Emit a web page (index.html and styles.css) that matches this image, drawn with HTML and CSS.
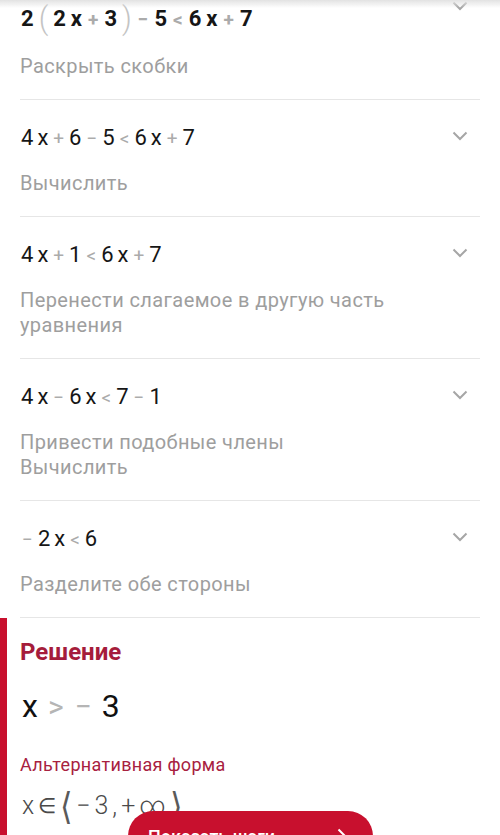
FILE: index.html
```html
<!DOCTYPE html>
<html lang="ru">
<head>
<meta charset="utf-8">
<title>Решение</title>
<link rel="stylesheet" href="styles.css">
</head>
<body>
<div class="top-shadow"></div>
<main class="page">
  <ul class="steps">
    <li class="step step-first">
      <div class="step-head">
        <div class="expr expr-bold">
          <span>2</span><span class="paren">(</span><span>2</span><span>x</span><span class="op">+</span><span>3</span><span class="paren">)</span><span class="op">−</span><span>5</span><span class="op">&lt;</span><span>6</span><span>x</span><span class="op">+</span><span>7</span>
        </div>
        <svg class="chev" viewBox="0 0 16 10" width="16" height="10"><path d="M1.5 1.5 L8 8 L14.5 1.5"/></svg>
      </div>
      <p class="desc">Раскрыть скобки</p>
    </li>
    <li class="step">
      <div class="step-head">
        <div class="expr">
          <span>4</span><span>x</span><span class="op">+</span><span>6</span><span class="op">−</span><span>5</span><span class="op">&lt;</span><span>6</span><span>x</span><span class="op">+</span><span>7</span>
        </div>
        <svg class="chev" viewBox="0 0 16 10" width="16" height="10"><path d="M1.5 1.5 L8 8 L14.5 1.5"/></svg>
      </div>
      <p class="desc">Вычислить</p>
    </li>
    <li class="step">
      <div class="step-head">
        <div class="expr">
          <span>4</span><span>x</span><span class="op">+</span><span>1</span><span class="op">&lt;</span><span>6</span><span>x</span><span class="op">+</span><span>7</span>
        </div>
        <svg class="chev" viewBox="0 0 16 10" width="16" height="10"><path d="M1.5 1.5 L8 8 L14.5 1.5"/></svg>
      </div>
      <p class="desc">Перенести слагаемое в другую часть уравнения</p>
    </li>
    <li class="step">
      <div class="step-head">
        <div class="expr">
          <span>4</span><span>x</span><span class="op">−</span><span>6</span><span>x</span><span class="op">&lt;</span><span>7</span><span class="op">−</span><span>1</span>
        </div>
        <svg class="chev" viewBox="0 0 16 10" width="16" height="10"><path d="M1.5 1.5 L8 8 L14.5 1.5"/></svg>
      </div>
      <p class="desc">Привести подобные члены<br>Вычислить</p>
    </li>
    <li class="step">
      <div class="step-head">
        <div class="expr">
          <span class="op">−</span><span>2</span><span>x</span><span class="op">&lt;</span><span>6</span>
        </div>
        <svg class="chev" viewBox="0 0 16 10" width="16" height="10"><path d="M1.5 1.5 L8 8 L14.5 1.5"/></svg>
      </div>
      <p class="desc">Разделите обе стороны</p>
    </li>
  </ul>

  <section class="solution">
    <h2 class="sol-title">Решение</h2>
    <div class="answer">
      <span>x</span><span class="op">&gt;</span><span class="op">−</span><span>3</span>
    </div>
    <h3 class="alt-title">Альтернативная форма</h3>
    <div class="alt">
      <span>x</span><span class="elem">∈</span><span class="bracket">⟨</span><span>−</span><span>3</span><span>,</span><span>+</span><span>∞</span><span class="bracket">⟩</span>
    </div>
  </section>
</main>

<button class="cta" type="button">
  <span class="cta-text">Показать шаги</span>
  <svg class="cta-chev" viewBox="0 0 10 16" width="10" height="16"><path d="M1.5 1.5 L8 8 L1.5 14.5"/></svg>
</button>
</body>
</html>
```

FILE: styles.css
```css
* { box-sizing: border-box; }

html, body {
  margin: 0;
  padding: 0;
  background: #ffffff;
  font-family: Roboto, "Noto Sans", "DejaVu Sans", sans-serif;
  overflow: hidden;
}

.top-shadow {
  position: fixed;
  top: 0;
  left: 0;
  right: 0;
  height: 8px;
  background: linear-gradient(#e2e2e2, rgba(255, 255, 255, 0));
  z-index: 5;
}

.page {
  margin-top: -30px;
}

.steps {
  list-style: none;
  margin: 0;
  padding: 0 20px;
}

.step {
  padding: 26px 0 20px;
  border-bottom: 1px solid #e6e6e6;
}

.step-head {
  display: flex;
  justify-content: space-between;
  align-items: flex-start;
}

.chev {
  margin-top: 5px;
  margin-right: 12px;
  fill: none;
  stroke: #a6a6a6;
  stroke-width: 2;
  flex: none;
}

.expr {
  display: flex;
  align-items: baseline;
  gap: 4px;
  padding-left: 1px;
  font-size: 22px;
  line-height: 24px;
  color: #161616;
}

.op {
  font-size: 19px;
  color: #ababab;
  padding: 0 1px;
}

.step-first .expr {
  font-weight: 700;
  line-height: 29px;
  padding-top: 5px;
  gap: 5px;
}

.paren {
  font-weight: 300;
  font-size: 30px;
  color: #c4c4c4;
  display: inline-block;
  transform: translateY(2px) scaleY(1.05);
}

.desc {
  margin: 20px 0 0;
  font-size: 20px;
  line-height: 25px;
  letter-spacing: 0.4px;
  color: #9e9e9e;
}

.solution {
  border-left: 7px solid #c8102e;
  padding: 20px 13px 60px;
}

.sol-title {
  margin: 0;
  font-size: 24px;
  line-height: 28px;
  font-weight: 700;
  color: #a51c3b;
}

.answer {
  display: flex;
  align-items: baseline;
  gap: 9px;
  margin-top: 22px;
  padding-left: 2px;
  font-size: 32px;
  line-height: 36px;
  color: #111111;
}

.answer .op {
  font-size: 30px;
  color: #b5b5b5;
  padding: 0 1px;
}

.alt-title {
  margin: 29px 0 0;
  font-size: 18px;
  line-height: 22px;
  letter-spacing: 0.3px;
  font-weight: 400;
  color: #a8213f;
}

.alt {
  display: flex;
  align-items: center;
  gap: 4px;
  margin-top: 15px;
  padding-left: 2px;
  font-size: 25px;
  line-height: 30px;
  font-weight: 300;
  color: #4a4a4a;
}

.alt .bracket {
  font-weight: 300;
  font-size: 32px;
  color: #5a5a5a;
  display: inline-block;
  transform: scaleY(1.15);
}

.alt .elem {
  font-family: "DejaVu Sans", sans-serif;
  font-size: 21px;
}

.cta {
  position: fixed;
  left: 128px;
  top: 811px;
  width: 245px;
  height: 50px;
  border: none;
  border-radius: 25px;
  background: #c8102e;
  color: #ffffff;
  font-family: Roboto, "Noto Sans", sans-serif;
  font-size: 18px;
  font-weight: 500;
  display: flex;
  align-items: center;
  justify-content: space-between;
  padding: 0 26px 0 20px;
}

.cta-text {
  white-space: nowrap;
}

.cta-chev {
  fill: none;
  stroke: #ffffff;
  stroke-width: 2;
}
```
